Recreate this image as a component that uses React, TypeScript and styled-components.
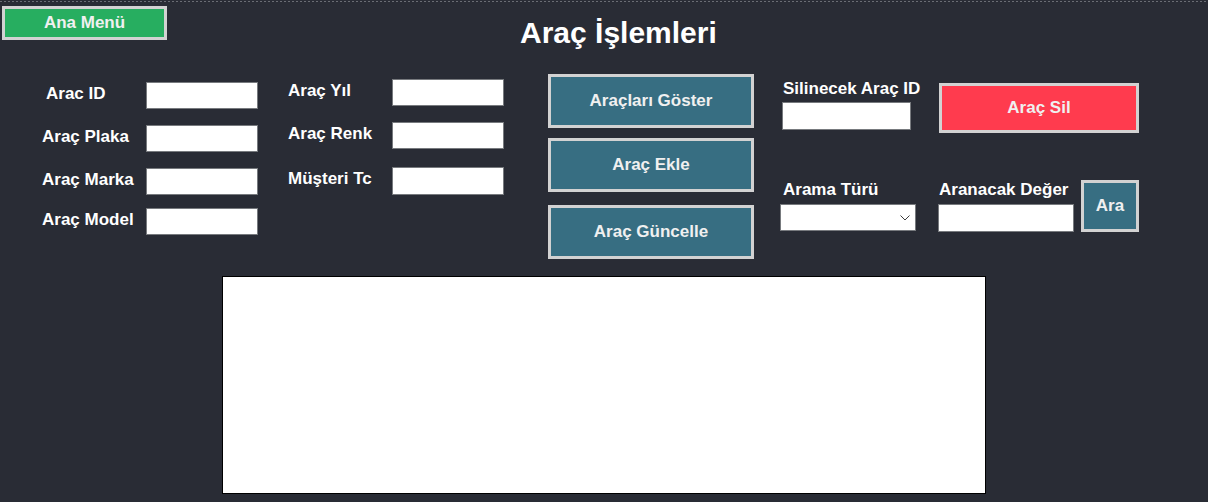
import React from "react";
import styled, { createGlobalStyle } from "styled-components";

const Global = createGlobalStyle`
  html, body { margin: 0; padding: 0; background: #292c35; }
  * { box-sizing: border-box; }
`;

const Window = styled.div`
  width: 1208px;
  height: 502px;
  overflow: hidden;
  font-family: "Liberation Sans", Arial, sans-serif;
  font-weight: bold;
  color: #ffffff;
  background:
    repeating-linear-gradient(90deg, #6a6d74 0 2px, transparent 2px 4px) 0 1px / 100% 1px no-repeat,
    #292c35;
`;

const Header = styled.div`
  display: flex;
  align-items: flex-start;
  height: 51px;
`;

const ActionButton = styled.button<{ $bg: string; $w: number; $h: number }>`
  width: ${(p) => p.$w}px;
  height: ${(p) => p.$h}px;
  background: ${(p) => p.$bg};
  border: 3px solid #d2d2d2;
  color: #f0f0f0;
  font-family: "Liberation Sans", Arial, sans-serif;
  font-weight: bold;
  font-size: 17px;
  padding: 0;
  display: flex;
  align-items: center;
  justify-content: center;
  flex: none;
`;

const MenuButton = styled(ActionButton)`
  margin: 6px 0 0 2px;
  padding-bottom: 1px;
`;

const Title = styled.h1`
  margin: 15px 0 0 353px;
  font-size: 30px;
  line-height: 36px;
  font-weight: bold;
  color: #ffffff;
`;

const Form = styled.div`
  display: flex;
  align-items: flex-start;
  margin-top: 23px;
  height: 185px;
`;

const FieldColumn = styled.div<{ $ml: number; $pt: number }>`
  display: flex;
  flex-direction: column;
  margin-left: ${(p) => p.$ml}px;
  padding-top: ${(p) => p.$pt}px;
`;

const FieldRow = styled.div<{ $mt: number }>`
  display: flex;
  align-items: flex-start;
  margin-top: ${(p) => p.$mt}px;
`;

const Label = styled.span<{ $w?: number; $indent?: number }>`
  display: block;
  width: ${(p) => (p.$w ? `${p.$w}px` : "auto")};
  padding-left: ${(p) => p.$indent ?? 0}px;
  font-size: 17px;
  line-height: 23px;
  white-space: nowrap;
  color: #ffffff;
`;

const TextBox = styled.div<{ $w: number; $h?: number; $ml?: number; $mt?: number }>`
  width: ${(p) => p.$w}px;
  height: ${(p) => p.$h ?? 27}px;
  margin-left: ${(p) => p.$ml ?? 0}px;
  margin-top: ${(p) => p.$mt ?? 0}px;
  background: #ffffff;
  border: 1px solid #777a7e;
  flex: none;
`;

const ComboBox = styled(TextBox)`
  display: flex;
  align-items: center;
  justify-content: flex-end;
  padding-right: 5px;
`;

const ButtonColumn = styled.div<{ $ml: number }>`
  display: flex;
  flex-direction: column;
  margin-left: ${(p) => p.$ml}px;
`;

const Spaced = styled.div<{ $mt: number; $ml?: number }>`
  margin-top: ${(p) => p.$mt}px;
  margin-left: ${(p) => p.$ml ?? 0}px;
`;

const StackColumn = styled.div<{ $ml: number; $pt: number; $w?: number }>`
  display: flex;
  flex-direction: column;
  margin-left: ${(p) => p.$ml}px;
  padding-top: ${(p) => p.$pt}px;
  width: ${(p) => (p.$w ? `${p.$w}px` : "auto")};
  flex: none;
`;

const Block = styled.div<{ $mt: number }>`
  display: flex;
  flex-direction: column;
  margin-top: ${(p) => p.$mt}px;
`;

const SearchRow = styled.div<{ $mt: number }>`
  display: flex;
  align-items: flex-start;
  margin-top: ${(p) => p.$mt}px;
  gap: 7px;
`;

const Grid = styled.div`
  margin: 17px 0 0 222px;
  width: 764px;
  height: 218px;
  background: #ffffff;
  border: 1px solid #000000;
`;

const Chevron = () => (
  <svg width="10" height="6" viewBox="0 0 10 6" fill="none">
    <path d="M0.5 0.5 L5 5 L9.5 0.5" stroke="#3c3c3c" strokeWidth="1" />
  </svg>
);

const TEAL = "#376e82";

export default function App() {
  return (
    <>
      <Global />
      <Window>
        <Header>
          <MenuButton $bg="#27ae60" $w={165} $h={34}>
            Ana Menü
          </MenuButton>
          <Title>Araç İşlemleri</Title>
        </Header>

        <Form>
          <FieldColumn $ml={42} $pt={8}>
            <FieldRow $mt={0}>
              <Label $w={104} $indent={4}>Arac ID</Label>
              <TextBox $w={112} />
            </FieldRow>
            <FieldRow $mt={16}>
              <Label $w={104}>Araç Plaka</Label>
              <TextBox $w={112} />
            </FieldRow>
            <FieldRow $mt={16}>
              <Label $w={104}>Araç Marka</Label>
              <TextBox $w={112} />
            </FieldRow>
            <FieldRow $mt={13}>
              <Label $w={104}>Araç Model</Label>
              <TextBox $w={112} />
            </FieldRow>
          </FieldColumn>

          <FieldColumn $ml={30} $pt={5}>
            <FieldRow $mt={0}>
              <Label $w={104}>Araç Yıl</Label>
              <TextBox $w={112} />
            </FieldRow>
            <FieldRow $mt={16}>
              <Label $w={104}>Araç Renk</Label>
              <TextBox $w={112} />
            </FieldRow>
            <FieldRow $mt={18}>
              <Label $w={104}>Müşteri Tc</Label>
              <TextBox $w={112} $h={28} />
            </FieldRow>
          </FieldColumn>

          <ButtonColumn $ml={44}>
            <ActionButton $bg={TEAL} $w={206} $h={54}>Araçları Göster</ActionButton>
            <Spaced $mt={10}>
              <ActionButton $bg={TEAL} $w={206} $h={54}>Araç Ekle</ActionButton>
            </Spaced>
            <Spaced $mt={13}>
              <ActionButton $bg={TEAL} $w={206} $h={54}>Araç Güncelle</ActionButton>
            </Spaced>
          </ButtonColumn>

          <StackColumn $ml={26} $pt={3} $w={136}>
            <Block $mt={0}>
              <Label $indent={3}>Silinecek Araç ID</Label>
              <TextBox $w={129} $h={28} $ml={2} $mt={2} />
            </Block>
            <Block $mt={48}>
              <Label $indent={3}>Arama Türü</Label>
              <ComboBox $w={136} $h={27} $mt={3}>
                <Chevron />
              </ComboBox>
            </Block>
          </StackColumn>

          <StackColumn $ml={22} $pt={9}>
            <Spaced $mt={0} $ml={1}>
              <ActionButton $bg="#ff3b4e" $w={200} $h={50}>Araç Sil</ActionButton>
            </Spaced>
            <SearchRow $mt={45}>
              <Block $mt={0}>
                <Label $indent={1}>Aranacak Değer</Label>
                <TextBox $w={136} $h={28} $mt={3} />
              </Block>
              <Spaced $mt={2}>
                <ActionButton $bg={TEAL} $w={58} $h={52}>Ara</ActionButton>
              </Spaced>
            </SearchRow>
          </StackColumn>
        </Form>

        <Grid />
      </Window>
    </>
  );
}
